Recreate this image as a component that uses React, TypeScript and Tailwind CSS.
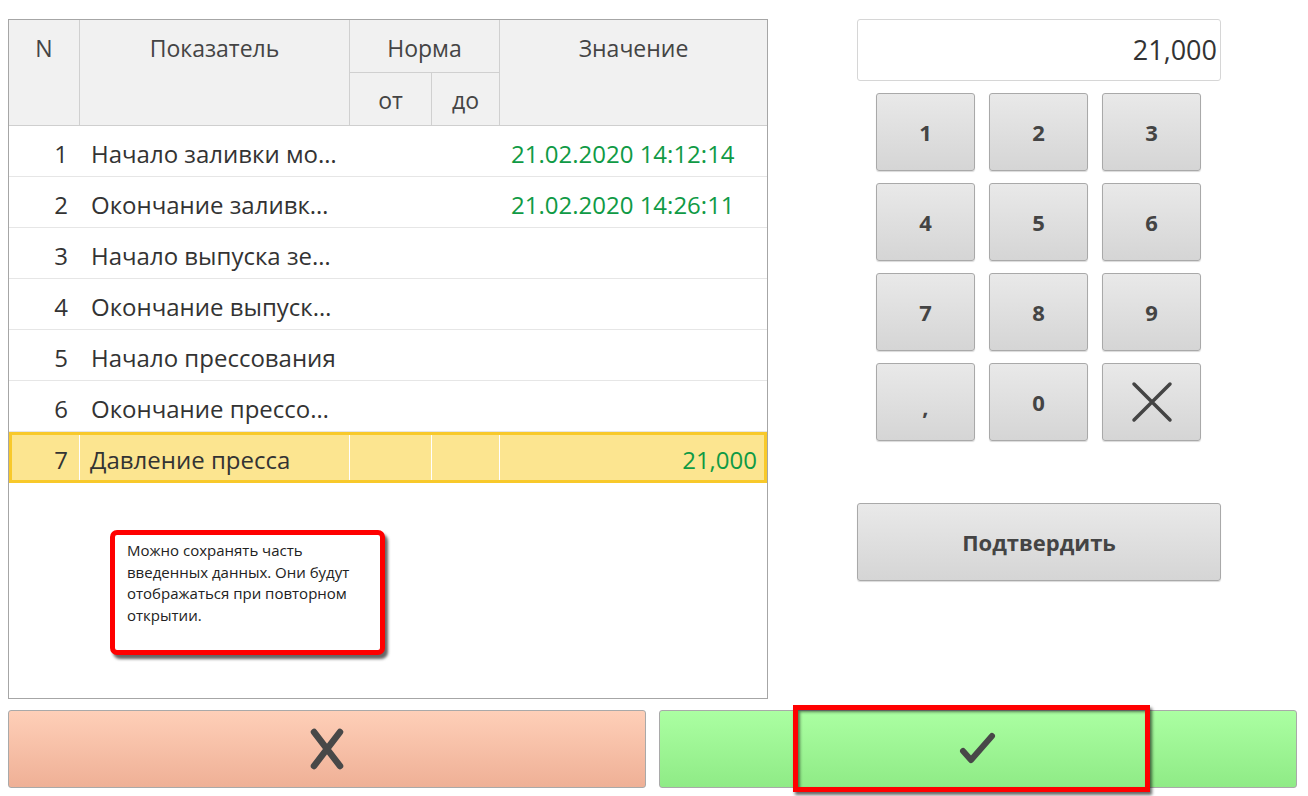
import React from "react";

const font = { fontFamily: '"Open Sans", "Noto Sans", sans-serif' };

type Row = { n: number; name: string; value?: string };
const rows: Row[] = [
  { n: 1, name: "Начало заливки мо…", value: "21.02.2020 14:12:14" },
  { n: 2, name: "Окончание заливк…", value: "21.02.2020 14:26:11" },
  { n: 3, name: "Начало выпуска зе…" },
  { n: 4, name: "Окончание выпуск…" },
  { n: 5, name: "Начало прессования" },
  { n: 6, name: "Окончание прессо…" },
];

function KeyBtn({ children }: { children: React.ReactNode }) {
  return (
    <div className="w-[99px] h-[78px] rounded-[3px] border border-[#a9a9a9] bg-gradient-to-b from-[#e9e9e9] to-[#d5d5d5] flex items-center justify-center text-[22px] font-bold text-[#444] shadow-[0_1px_1px_rgba(0,0,0,0.15)]">
      {children}
    </div>
  );
}

export default function App() {
  return (
    <div className="w-[1308px] h-[796px] bg-white relative overflow-hidden" style={font}>
      <div className="flex pt-[19px] pl-[8px] h-[699px]">
        {/* Table */}
        <div className="w-[760px] h-[680px] border border-[#a6a6a6] flex flex-col">
          {/* header */}
          <div className="flex h-[106px] bg-[#f1f1f1] border-b border-[#cfcfcf] text-[23px] leading-[30px] text-[#444]">
            <div className="w-[71px] border-r border-[#d0d0d0] flex justify-center pt-[13px]">N</div>
            <div className="w-[270px] border-r border-[#d0d0d0] flex justify-center pt-[13px]">Показатель</div>
            <div className="w-[150px] border-r border-[#d0d0d0] flex flex-col">
              <div className="h-[53px] border-b border-[#d0d0d0] flex justify-center pt-[13px]">Норма</div>
              <div className="flex flex-1">
                <div className="w-[82px] border-r border-[#d0d0d0] flex justify-center pt-[12px]">от</div>
                <div className="flex-1 flex justify-center pt-[12px]">до</div>
              </div>
            </div>
            <div className="flex-1 flex justify-center pt-[13px]">Значение</div>
          </div>
          {/* rows */}
          {rows.map((r) => (
            <div key={r.n} className="flex h-[51px] border-b border-[#e6e6e6] items-center pt-[5px] text-[24px] leading-[30px] text-[#333] whitespace-nowrap">
              <div className="w-[71px] text-right pr-[12px]">{r.n}</div>
              <div className="w-[270px] pl-[11px]">{r.name}</div>
              <div className="w-[150px]" />
              <div className="flex-1 pl-[11px] text-[#0f9a45]">{r.value}</div>
            </div>
          ))}
          <div className="flex h-[51px] border-[3px] border-[#f8c92a] bg-[#fce590] items-stretch text-[24px] leading-[30px] text-[#333] whitespace-nowrap">
            <div className="w-[68px] border-r border-white flex items-center justify-end pr-[11px] pt-[4px]">7</div>
            <div className="w-[270px] border-r border-white flex items-center pl-[10px] pt-[4px]">Давление пресса</div>
            <div className="w-[82px] border-r border-white" />
            <div className="w-[68px] border-r border-white" />
            <div className="flex-1 flex items-center justify-end pr-[7px] pt-[4px] text-[#0f9a45]">21,000</div>
          </div>
        </div>

        {/* Right panel */}
        <div className="ml-[89px] w-[364px] flex flex-col">
          <div className="h-[62px] border border-[#d6d6d6] rounded-[3px] flex items-center justify-end pr-[3px] text-[27px] text-[#333]">
            21,000
          </div>
          <div className="mt-[12px] ml-[19px] grid grid-cols-[99px_99px_99px] gap-x-[14px] gap-y-[12px]">
            <KeyBtn>1</KeyBtn>
            <KeyBtn>2</KeyBtn>
            <KeyBtn>3</KeyBtn>
            <KeyBtn>4</KeyBtn>
            <KeyBtn>5</KeyBtn>
            <KeyBtn>6</KeyBtn>
            <KeyBtn>7</KeyBtn>
            <KeyBtn>8</KeyBtn>
            <KeyBtn>9</KeyBtn>
            <KeyBtn>
              <span className="mt-[8px]">,</span>
            </KeyBtn>
            <KeyBtn>0</KeyBtn>
            <KeyBtn>
              <svg width="42" height="42" viewBox="0 0 42 42">
                <path d="M3 3 L39 39 M39 3 L3 39" stroke="#444" strokeWidth="3.5" strokeLinecap="round" />
              </svg>
            </KeyBtn>
          </div>
          <div className="mt-[62px] h-[78px] rounded-[3px] border border-[#a9a9a9] bg-gradient-to-b from-[#e9e9e9] to-[#d5d5d5] flex items-center justify-center text-[22px] font-bold text-[#444] shadow-[0_1px_1px_rgba(0,0,0,0.15)]">
            Подтвердить
          </div>
        </div>
      </div>

      {/* Bottom buttons */}
      <div className="flex gap-[13px] pl-[8px] mt-[11px]">
        <div className="w-[638px] h-[78px] rounded-[3px] border border-[#a9a9a9] bg-gradient-to-b from-[#fecfb8] to-[#efb096] flex items-center justify-center">
          <svg width="36" height="42" viewBox="0 0 36 42">
            <path d="M5 4 L31 38 M31 4 L5 38" stroke="#484848" strokeWidth="6.5" strokeLinecap="round" />
          </svg>
        </div>
        <div className="w-[638px] h-[78px] rounded-[3px] border border-[#a9a9a9] bg-gradient-to-b from-[#abffa2] to-[#8feb86] flex items-center justify-center">
          <svg width="40" height="36" viewBox="0 0 40 36">
            <path d="M5 20 L13 29 L34 5" stroke="#484848" strokeWidth="6" strokeLinecap="round" strokeLinejoin="round" fill="none" />
          </svg>
        </div>
      </div>

      {/* Tooltip annotation */}
      <div className="absolute left-[110px] top-[530px] w-[275px] h-[125px] border-[5px] border-[#ff0000] rounded-[7px] bg-white shadow-[3px_4px_3px_rgba(0,0,0,0.6)] px-[12px] pt-[5px] text-[15px] leading-[21.5px] text-[#222]">
        Можно сохранять часть введенных данных. Они будут отображаться при повторном открытии.
      </div>

      {/* Highlight frame */}
      <div className="absolute left-[793px] top-[705px] w-[357px] h-[87px] border-[5px] border-[#ff0000] shadow-[2px_3px_3px_rgba(0,0,0,0.6),inset_2px_2px_3px_rgba(0,0,0,0.5)]" />
    </div>
  );
}
